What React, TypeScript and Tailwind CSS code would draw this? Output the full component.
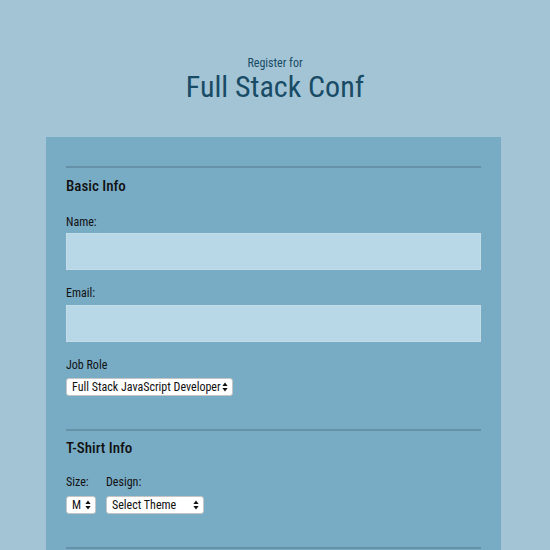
import { ReactNode } from "react";

const Arrows = () => (
  <svg width="6" height="10" viewBox="0 0 6 10" className="absolute right-[4px] top-1/2 -translate-y-1/2">
    <path d="M3 0.5 L5.6 4 H0.4 Z" fill="#111" />
    <path d="M3 9.5 L5.6 6 H0.4 Z" fill="#111" />
  </svg>
);

const Select = ({ width, children }: { width: string; children: ReactNode }) => (
  <div
    className={`relative h-[18px] ${width} bg-white rounded-[3px] border border-[#c5c5c5] pl-[5px] text-[12px] leading-[16px] text-[#111] whitespace-nowrap overflow-hidden`}
  >
    {children}
    <Arrows />
  </div>
);

const Label = ({ children, className = "" }: { children: ReactNode; className?: string }) => (
  <label className={`block text-[12px] leading-[16px] text-[#111] ${className}`}>{children}</label>
);

export default function App() {
  return (
    <div
      className="w-[550px] h-[550px] overflow-hidden bg-[#a3c4d5] font-stretch-[76%]"
      style={{ fontFamily: "Roboto, 'Noto Sans', sans-serif" }}
    >
      <header className="pt-[56px] text-center text-[#184b65]">
        <p className="text-[12px] leading-[14px]">Register for</p>
        <h1 className="-mt-[1px] text-[30px] leading-[36px]">Full Stack Conf</h1>
      </header>

      <form className="mt-[32px] mx-[46px] w-[455px] bg-[#78abc4] px-[20px] pt-[29px]">
        <div className="h-[2px] bg-[#6592a9]" />
        <h2 className="mt-[8px] text-[15px] leading-[20px] font-medium text-[#111]">Basic Info</h2>

        <Label className="mt-[18px]">Name:</Label>
        <input className="mt-[3px] block w-full h-[37px] bg-[#b8d8e8] border border-[#c3dce8]" />

        <Label className="mt-[15px]">Email:</Label>
        <input className="mt-[4px] block w-full h-[37px] bg-[#b8d8e8] border border-[#c3dce8]" />

        <Label className="mt-[15px]">Job Role</Label>
        <div className="mt-[5px]">
          <Select width="w-[167px]">Full Stack JavaScript Developer</Select>
        </div>

        <div className="mt-[33px] h-[2px] bg-[#6592a9]" />
        <h2 className="mt-[7px] text-[15px] leading-[20px] font-medium text-[#111]">T-Shirt Info</h2>

        <div className="mt-[16px] flex gap-[10px]">
          <div>
            <Label>Size:</Label>
            <div className="mt-[6px]">
              <Select width="w-[30px]">M</Select>
            </div>
          </div>
          <div>
            <Label>Design:</Label>
            <div className="mt-[6px]">
              <Select width="w-[98px]">Select Theme</Select>
            </div>
          </div>
        </div>

        <div className="mt-[33px] h-[2px] bg-[#6592a9]" />
        <div className="h-[40px]" />
      </form>
    </div>
  );
}
